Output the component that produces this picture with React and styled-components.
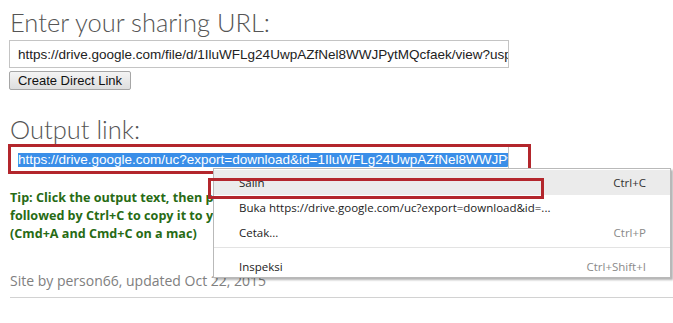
import styled, { createGlobalStyle } from "styled-components";

const GlobalStyle = createGlobalStyle`
  html, body { margin: 0; padding: 0; background: #fff; }
  body { width: 673px; height: 323px; overflow: hidden; }
`;

const Page = styled.div`
  position: relative;
  padding: 0 0 0 9px;
`;

const Heading = styled.h2`
  margin: ${(p) => p.$top || 6}px 0 0 1px;
  font-family: "Lato", "DejaVu Sans", sans-serif;
  font-weight: 300;
  font-size: 25.5px;
  line-height: 32px;
  color: #555;
`;

const UrlBox = styled.div`
  box-sizing: border-box;
  width: 500px;
  height: 28px;
  margin-top: ${(p) => p.$top || 0}px;
  border: 1px solid #c4c4c4;
  padding: 0 8px;
  display: flex;
  align-items: center;
  overflow: hidden;
  white-space: nowrap;
  font-family: "Liberation Sans", Arial, sans-serif;
  font-size: 13.5px;
  color: #222;
`;

const Selected = styled.span`
  background: #3a8ee8;
  color: #fff;
  line-height: 14px;
`;

const Button = styled.button`
  display: block;
  box-sizing: border-box;
  margin-top: 3px;
  width: 122px;
  height: 19px;
  padding: 0;
  border: 1px solid #a6a6a6;
  border-radius: 2px;
  background: linear-gradient(#f4f4f4, #dedede);
  font-family: "Liberation Sans", Arial, sans-serif;
  font-size: 13px;
  color: #111;
`;

const Tip = styled.p`
  margin: 15px 0 0 1px;
  font-family: "Open Sans", sans-serif;
  font-weight: 700;
  font-size: 12.6px;
  line-height: 18px;
  color: #276b14;
`;

const Credit = styled.p`
  margin: 29px 0 0 1px;
  font-family: "Open Sans", sans-serif;
  font-size: 14px;
  line-height: 18px;
  color: #808080;
`;

const Rule = styled.hr`
  margin: 7px 0 0 1px;
  border: 0;
  border-top: 1px solid #d2d2d2;
`;

const Mark = styled.div`
  position: absolute;
  box-sizing: border-box;
  border: 3px solid #b3262c;
`;

const Menu = styled.div`
  position: absolute;
  left: 213px;
  top: 162px;
  box-sizing: border-box;
  width: 458px;
  height: 110px;
  padding-top: 1px;
  background: #fff;
  border: 1px solid #b9b9b9;
  box-shadow: 2px 2px 2px rgba(0, 0, 0, 0.3);
  font-family: "Open Sans", sans-serif;
  font-size: 11.5px;
  color: #222;
`;

const Item = styled.div`
  display: flex;
  justify-content: space-between;
  align-items: center;
  height: 25px;
  padding: 0 24px 0 25px;
  background: ${(p) => (p.$active ? "#ebebeb" : "transparent")};
`;

const Key = styled.span`
  color: ${(p) => (p.$dim ? "#8a8a8a" : "#333")};
`;

const Separator = styled.div`
  height: 1px;
  margin: 2px 0 6px;
  background: #e3e3e3;
`;

export default function App() {
  return (
    <Page>
      <GlobalStyle />
      <Heading>Enter your sharing URL:</Heading>
      <UrlBox $top={2}>
        https://drive.google.com/file/d/1IluWFLg24UwpAZfNel8WWJPytMQcfaek/view?usp=sharing
      </UrlBox>
      <Button>Create Direct Link</Button>
      <Heading $top={23}>Output link:</Heading>
      <UrlBox $top={1}>
        <Selected>https://drive.google.com/uc?export=download&amp;id=1IluWFLg24UwpAZfNel8WWJPytMQcfaek</Selected>
      </UrlBox>
      <Tip>
        Tip: Click the output text, then press Ctrl+A to select it all,
        <br />
        followed by Ctrl+C to copy it to your clipboard.
        <br />
        (Cmd+A and Cmd+C on a mac)
      </Tip>
      <Credit>Site by person66, updated Oct 22, 2015</Credit>
      <Rule />

      <Mark style={{ left: 8, top: 138, width: 523, height: 30 }} />
      <Menu>
        <Item $active>
          <span>Salin</span>
          <Key>Ctrl+C</Key>
        </Item>
        <Item>
          <span>Buka https://drive.google.com/uc?export=download&amp;id=...</span>
        </Item>
        <Item>
          <span>Cetak...</span>
          <Key $dim>Ctrl+P</Key>
        </Item>
        <Separator />
        <Item>
          <span>Inspeksi</span>
          <Key $dim>Ctrl+Shift+I</Key>
        </Item>
      </Menu>
      <Mark style={{ left: 208, top: 172, width: 336, height: 21 }} />
    </Page>
  );
}
